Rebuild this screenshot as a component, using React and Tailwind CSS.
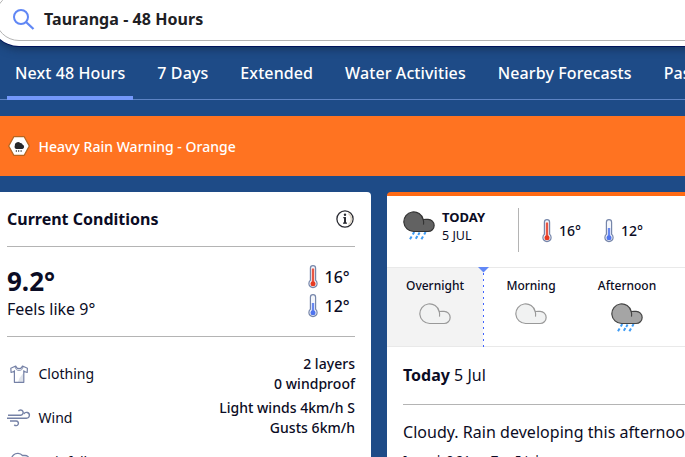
import React from "react";

const tabs = ["Next 48 Hours", "7 Days", "Extended", "Water Activities", "Nearby Forecasts", "Past Weather"];

const SearchIcon = () => (
  <svg width="22" height="22" viewBox="0 0 22 22" fill="none" stroke="#6087f5" strokeWidth="2">
    <circle cx="8" cy="8" r="7" />
    <path d="M13 13l7.5 7" strokeWidth="2.3" />
  </svg>
);

const WarningIcon = () => (
  <svg width="22" height="20" viewBox="0 0 22 20">
    <path d="M5.8 0.7h10.4L21.3 10l-5.1 9.3H5.8L0.7 10z" fill="#fff" stroke="#b5651f" strokeWidth="1.3" strokeLinejoin="round" />
    <path d="M8.6 13a2.2 2.2 0 0 1-1.8-3.2 3.2 3.2 0 0 1 5.5-2.7 2.3 2.3 0 0 1 2.4 1.7 2.2 2.2 0 0 1-.3 4.2z" fill="#26282b" />
    <path d="M8.3 14.2v1.6M10.7 14.2v1.6M13.1 14.2v1.6" stroke="#26282b" strokeWidth="1" />
  </svg>
);

const InfoIcon = () => (
  <svg width="18" height="18" viewBox="0 0 18 18" fill="none">
    <circle cx="9" cy="9" r="8.1" stroke="#2b2c33" strokeWidth="1.3" />
    <path d="M12.5 3.3a7 7 0 0 1 0 11.4" stroke="#ddd5c8" strokeWidth="1.6" />
    <path d="M7.3 7.6h1.8v5.2M7 13.2h4" stroke="#2b2c33" strokeWidth="1.2" />
    <path d="M9 7.2v6" stroke="#2b2c33" strokeWidth="2" />
    <circle cx="9" cy="4.8" r="1.2" fill="#2b2c33" />
  </svg>
);

function Thermometer({ warm }) {
  const color = warm ? "#e63a22" : "#4f74ee";
  return (
    <svg width="10" height="24" viewBox="0 0 10 24" fill="none">
      <path
        d="M2.4 15.3V3.3a2.6 2.6 0 0 1 5.2 0v12a4.1 4.1 0 1 1-5.2 0z"
        fill="#f4f6fb"
        stroke="#7686aa"
        strokeWidth="1.2"
      />
      <path d={warm ? "M5 3.5v15" : "M5 9v9.5"} stroke={color} strokeWidth="2.4" opacity="0.85" />
      <circle cx="5" cy="18.7" r="2.5" fill={color} />
    </svg>
  );
}

function Cloud({ fill, stroke, rain }) {
  return (
    <svg width="32" height="30" viewBox="0 0 32 30" fill="none">
      {rain && (
        <path
          d="M11.2 21l-1.4 2.4M8.6 25.5l-1.6 2.8M16.6 21.5l-1.4 2.4M14.4 25l-1.6 2.8M22.6 21l-1.4 2.4M20 25.5l-1.6 2.8"
          stroke="#3f9cf4"
          strokeWidth="2"
        />
      )}
      <path
        d="M10.7 20.5h14.4a5.6 5.6 0 0 0 0-12.1c-1.6 0-2.7.1-4.9.1A9.8 9.8 0 1 0 10.7 20.5z"
        fill={fill}
        stroke={stroke}
        strokeWidth="1.2"
      />
      <path d="M20.2 8.5c.5 1.7.6 3 .3 5.1" stroke={stroke} strokeWidth="1.1" />
    </svg>
  );
}

const ShirtIcon = () => (
  <svg width="24" height="24" viewBox="0 0 24 24" fill="none" stroke="#7581a6" strokeWidth="1.2" strokeLinejoin="round">
    <path d="M11 20h5.5V11l-4 5z" fill="#dfe3ea" stroke="none" />
    <path d="M8.7 4L3.8 6.3l.3 4.2 3.3-1.2v11h9.4v-11l3.4 1.2.2-4.2L15.5 4c-.5 1.9-1.4 2.7-3.4 2.7S9.2 5.9 8.7 4z" />
    <path d="M8 4.9c.9 2.8 2.1 3.6 4.1 3.6s3.3-.8 4.1-3.6M7.4 9.3V8M16.8 9.3V8" strokeWidth="0.8" />
  </svg>
);

const WindIcon = () => (
  <svg width="24" height="24" viewBox="0 0 24 24" fill="none" stroke="#7581a6" strokeWidth="1.4">
    <path d="M1 9.2h12.5a2.6 2.6 0 1 0-2.1-4" />
    <path d="M0 12.2h19.5a2.9 2.9 0 1 0-2.6-4.2" />
    <path d="M3 15h6a2.3 2.3 0 1 1-1.7 3.7" />
  </svg>
);

const RainfallIcon = () => (
  <svg width="24" height="24" viewBox="0 0 24 24" fill="none" stroke="#7581a6" strokeWidth="1.3">
    <path d="M6 14a5.8 5.8 0 1 1 9.5-8.500H18a3.700 3.700 0 0 1 0 8.500z" />
  </svg>
);

function ConditionRow({ icon, label, lines }) {
  return (
    <div className="flex h-10 items-center text-[14px]">
      {icon}
      <span className="ml-[7.5px] flex-1 pb-0.5">{label}</span>
      <div className="text-right leading-5 font-medium tracking-[0.03px]">
        {lines.map((line) => (
          <div key={line}>{line}</div>
        ))}
      </div>
    </div>
  );
}

function CurrentConditions() {
  return (
    <section className="h-[300px] w-[371px] shrink-0 rounded-tr bg-white pr-4 pl-[7px]">
      <div className="flex h-[55px] items-center justify-between border-b border-[#b4b4b4] pr-px">
        <h2 className="text-[16px] font-bold">Current Conditions</h2>
        <InfoIcon />
      </div>
      <div className="flex h-[90px] justify-between border-b border-[#b4b4b4] pt-[15px]">
        <div>
          <div className="mt-px h-9 text-[26px] leading-9 font-bold">9.2°</div>
          <div className="text-[16px] leading-5">Feels like 9°</div>
        </div>
        <div className="w-[47.5px] text-[16px] font-medium">
          <div className="flex h-[29px] items-center gap-[7px]">
            <Thermometer warm />
            16°
          </div>
          <div className="flex h-[29px] items-center gap-[7px]">
            <Thermometer />
            12°
          </div>
        </div>
      </div>
      <div className="flex flex-col gap-1 pt-[17px]">
        <ConditionRow icon={<ShirtIcon />} label="Clothing" lines={["2 layers", "0 windproof"]} />
        <ConditionRow icon={<WindIcon />} label="Wind" lines={["Light winds 4km/h S", "Gusts 6km/h"]} />
        <ConditionRow icon={<RainfallIcon />} label="Rainfall" lines={[]} />
      </div>
    </section>
  );
}

function Period({ label, className = "", children }) {
  return (
    <div className={`flex w-24 shrink-0 flex-col items-center pt-2 ${className}`}>
      <span className="text-[12px] leading-5 font-medium">{label}</span>
      <div className="mt-[7px]">{children}</div>
    </div>
  );
}

function Today() {
  return (
    <section className="h-[300px] w-[400px] shrink-0 rounded-tl border-t-4 border-[#ff6a14] bg-white">
      <div className="flex h-[71px] items-start pl-4">
        <div className="mt-[15px]">
          <Cloud fill="#626262" stroke="#333" rain />
        </div>
        <div className="mt-3 ml-[7px] w-[76px] text-[12.5px] leading-[18px]">
          <div className="text-[13px] font-bold">TODAY</div>
          <div className="pt-px">5 JUL</div>
        </div>
        <div className="mt-3 h-11 w-px bg-[#b4b4b4]" />
        <div className="mt-[23px] ml-[23px] flex items-center gap-[7px] text-[14px] font-medium">
          <Thermometer warm />
          <span className="pb-0.5">16°</span>
        </div>
        <div className="mt-[23px] ml-[23px] flex items-center gap-[7px] text-[14px] font-medium">
          <Thermometer />
          <span className="pb-0.5">12°</span>
        </div>
      </div>
      <div className="relative flex h-20 border-y border-[#e9e9e9]">
        <Period label="Overnight" className="bg-[#f3f3f3]">
          <Cloud fill="#f1f2f2" stroke="#999" />
        </Period>
        <Period label="Morning">
          <Cloud fill="#f1f2f2" stroke="#999" />
        </Period>
        <Period label="Afternoon">
          <Cloud fill="#a5a5a5" stroke="#444" rain />
        </Period>
        {/* current time marker */}
        <svg className="absolute -top-px left-[91px]" width="12" height="80" viewBox="0 0 12 80">
          <path d="M0 0h11L5.5 5.5z" fill="#6288f6" />
          <path d="M5.5 6v74" stroke="#3f64ff" strokeDasharray="2 4" />
        </svg>
      </div>
      <div className="pl-4">
        <div className="h-[58px] border-b border-[#b4b4b4] text-[16px] leading-[56px]">
          <b>Today</b> 5 Jul
        </div>
        <p className="mt-[15px] text-[16px] leading-6 tracking-[0.03px] whitespace-nowrap">
          Cloudy. Rain developing this afternoon.
        </p>
        <p className="mt-[9px] text-[12px] leading-4">Issued: 8:31am Tue 5 Jul</p>
      </div>
    </section>
  );
}

export default function App() {
  return (
    <div className="h-[457px] w-[685px] overflow-hidden bg-[#1e4b87] font-['Noto_Sans',sans-serif] text-[#0b0c24]">
      <header className="flow-root h-[46px]">
        <div className="-mt-3 -ml-[10px] h-[58px] w-[760px] rounded-l-full bg-white p-[5px] shadow-[0_1px_0_#00155c,0_3px_8px_#17345c]">
          <div className="flex h-12 items-center rounded-l-full border border-[#b4b4b4] pt-[5px] pl-[17px]">
            <SearchIcon />
            <span className="ml-[9px] pb-px text-[16px] font-bold tracking-[0.06px] text-[#202024]">
              Tauranga - 48 Hours
            </span>
          </div>
        </div>
      </header>

      <nav className="flex h-[54px] gap-4 border-b border-[#5c83c4] pl-[7px] text-[16px] font-medium tracking-[0.1px] whitespace-nowrap text-white">
        {tabs.map((tab, i) => (
          <a
            key={tab}
            className={
              i === 0
                ? "h-[54px] shrink-0 border-b-4 border-[#7398fb] px-2 leading-[54px]"
                : "h-[54px] shrink-0 px-2 leading-[54px]"
            }
          >
            {tab}
          </a>
        ))}
      </nav>

      <div className="mt-4 flex h-[60px] items-center bg-[#ff7321] pl-2 text-[14px] font-medium text-white">
        <WarningIcon />
        <span className="ml-[8.5px] tracking-[0.02px]">Heavy Rain Warning - Orange</span>
      </div>

      <main className="mt-4 flex gap-4">
        <CurrentConditions />
        <Today />
      </main>
    </div>
  );
}
